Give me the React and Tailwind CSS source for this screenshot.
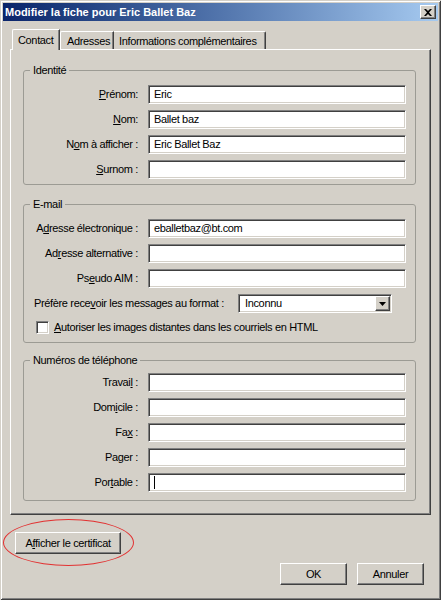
import React from 'react'

const raised =
  'bg-[#d4d0c8] border border-t-white border-l-white border-r-[#404040] border-b-[#404040] shadow-[inset_-1px_-1px_0_#808080]'
const sunken =
  'bg-white border border-t-[#808080] border-l-[#808080] border-r-white border-b-white shadow-[inset_1px_1px_0_#404040,inset_-1px_-1px_0_#d4d0c8]'

function U({ text, u }) {
  if (u === undefined) return text
  return (
    <>
      {text.slice(0, u)}
      <span className="underline underline-offset-[1px]">{text[u]}</span>
      {text.slice(u + 1)}
    </>
  )
}

function Field({ label, u, value, caret }) {
  return (
    <div className="flex items-center">
      <div className="w-[114px] text-right whitespace-nowrap">
        <U text={label} u={u} />
      </div>
      <div className={`ml-[10px] w-[258px] h-[19px] flex items-center pl-[5px] text-black ${sunken}`}>
        {value}
        {caret && <span className="w-px h-[13px] bg-black" />}
      </div>
    </div>
  )
}

function Group({ title, className = '', children }) {
  return (
    <fieldset className={`w-[393px] border border-[#9c9b94] rounded-[3px] ${className}`}>
      <legend className="ml-[6px] px-[3px] leading-[13px]">{title}</legend>
      {children}
    </fieldset>
  )
}

export default function App() {
  return (
    <div className="w-[441px] h-[600px] bg-[#d4d0c8] p-[3px] flex flex-col font-['Liberation_Sans',Arial,sans-serif] text-[11px] leading-[13px] tracking-[-0.35px] text-black shadow-[inset_1px_1px_0_#d4d0c8,inset_-1px_-1px_0_#404040,inset_2px_2px_0_#ffffff,inset_-2px_-2px_0_#808080]">
      {/* title bar */}
      <div className="h-[18px] flex items-center justify-between pl-[2px] pr-[2px] bg-gradient-to-r from-[#0a246a] to-[#a6caf0]">
        <span className="text-white font-bold text-[11px] tracking-normal leading-none">Modifier la fiche pour Eric Ballet Baz</span>
        <div className={`w-[16px] h-[14px] flex items-center justify-center ${raised}`}>
          <svg width="8" height="7" viewBox="0 0 8 7">
            <path d="M0 0h2l2 2 2-2h2L5 3.5 8 7H6L4 5 2 7H0l3-3.5z" fill="#000" />
          </svg>
        </div>
      </div>

      <div className="flex flex-col px-[7px] pt-[8px]">
        {/* tabs */}
        <div className="flex items-end h-[20px] pl-[2px]">
          <div className="relative z-10 -mb-px w-[48px] h-[21px] pl-[5px] pt-[4px] bg-[#d4d0c8] border-t border-l border-white border-r border-r-[#404040] rounded-tl-[2px] shadow-[inset_-1px_0_0_#808080]">
            Contact
          </div>
          <div className="w-[54px] h-[18px] pl-[6px] pt-[3px] border-t border-l border-white border-r border-r-[#404040] rounded-tl-[2px] shadow-[inset_-1px_0_0_#808080]">
            Adresses
          </div>
          <div className="w-[152px] h-[18px] pl-[5px] pt-[3px] border-t border-white border-r border-r-[#404040] rounded-tr-[2px] shadow-[inset_-1px_0_0_#808080]">
            Informations complémentaires
          </div>
        </div>

        {/* panel */}
        <div className="w-[421px] h-[466px] pl-[12px] border-t border-l border-white border-r border-b border-r-[#404040] border-b-[#404040] shadow-[inset_-1px_-1px_0_#808080]">
          <Group title="Identité" className="mt-[14px] pt-[8px] pb-[5px]">
            <div className="flex flex-col gap-[6px]">
              <Field label="Prénom:" u={0} value="Eric" />
              <Field label="Nom:" u={0} value="Ballet baz" />
              <Field label="Nom à afficher :" u={1} value="Eric Ballet Baz" />
              <Field label="Surnom :" u={0} />
            </div>
          </Group>

          <Group title="E-mail" className="mt-[13px] pt-[8px] pb-[8px]">
            <div className="flex flex-col gap-[6px]">
              <Field label="Adresse électronique :" u={1} value="eballetbaz@bt.com" />
              <Field label="Adresse alternative :" u={2} />
              <Field label="Pseudo AIM :" u={2} />
              <div className="flex items-center pl-[10px]">
                <div className="w-[204px] whitespace-nowrap">
                  <U text="Préfère recevoir les messages au format :" u={12} />
                </div>
                <div className={`w-[154px] h-[19px] flex items-center justify-between pl-[6px] pr-px ${sunken}`}>
                  <span>Inconnu</span>
                  <div className={`w-[15px] h-[15px] flex items-center justify-center ${raised}`}>
                    <svg width="7" height="4" viewBox="0 0 7 4">
                      <path d="M0 0h7L3.5 4z" fill="#000" />
                    </svg>
                  </div>
                </div>
              </div>
              <div className="flex items-center pl-[12px] mt-[2px] gap-[5px]">
                <div className={`w-[13px] h-[13px] ${sunken}`} />
                <span>
                  <U text="Autoriser les images distantes dans les courriels en HTML" u={0} />
                </span>
              </div>
            </div>
          </Group>

          <Group title="Numéros de téléphone" className="mt-[11px] pt-[6px] pb-[8px]">
            <div className="flex flex-col gap-[6px]">
              <Field label="Travail :" u={6} />
              <Field label="Domicile :" u={3} />
              <Field label="Fax :" u={2} />
              <Field label="Pager :" u={2} />
              <Field label="Portable :" u={3} caret />
            </div>
          </Group>
        </div>

        {/* bottom buttons */}
        <div className="relative ml-[5px] mt-[17px] w-[106px]">
          <div className={`h-[22px] flex items-center justify-center ${raised}`}>
            <U text="Afficher le certificat" u={1} />
          </div>
          <div className="absolute -left-[12px] -top-[13px] w-[131px] h-[47px] border border-[#e23232] rounded-[50%]" />
        </div>
        <div className="flex justify-end gap-[10px] mt-[9px] pr-[7px]">
          <div className={`w-[67px] h-[22px] flex items-center justify-center ${raised}`}>OK</div>
          <div className={`w-[67px] h-[22px] flex items-center justify-center ${raised}`}>Annuler</div>
        </div>
      </div>
    </div>
  )
}
